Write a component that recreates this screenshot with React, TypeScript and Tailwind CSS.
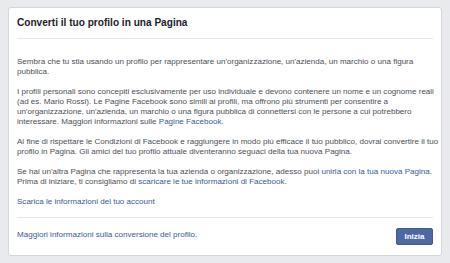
export default function App() {
  return (
    <div className="min-h-[263px] w-[450px] bg-[#e9eaed] px-2 pt-[7px] font-['Liberation_Sans',Arial,sans-serif]">
      <div className="w-[434px] rounded-[3px] border border-[#d3d6db] bg-white">
        <div className="px-[8px]">
          <div className="flex h-[31px] items-center border-b border-[#e5e5e5] pb-[1px] text-[10.1px] font-bold text-[#1d2129]">
            Converti il tuo profilo in una Pagina
          </div>
        </div>
        <div className="px-[8px] pt-[18px] pb-[10px] text-[8.05px] leading-[10px] text-[#4b4f56] whitespace-nowrap">
          <p className="mb-[10px]">
            Sembra che tu stia usando un profilo per rappresentare un'organizzazione, un'azienda, un marchio o una figura
            <br />
            pubblica.
          </p>
          <p className="mb-[10px]">
            I profili personali sono concepiti esclusivamente per uso individuale e devono contenere un nome e un cognome reali
            <br />
            (ad es. Mario Rossi). Le Pagine Facebook sono simili ai profili, ma offrono più strumenti per consentire a
            <br />
            un'organizzazione, un'azienda, un marchio o una figura pubblica di connettersi con le persone a cui potrebbero
            <br />
            interessare. Maggiori informazioni sulle <span className="text-[#3b5998]">Pagine Facebook</span>.
          </p>
          <p className="mb-[10px]">
            Al fine di rispettare le Condizioni di Facebook e raggiungere in modo più efficace il tuo pubblico, dovrai convertire il tuo
            <br />
            profilo in Pagina. Gli amici del tuo profilo attuale diventeranno seguaci della tua nuova Pagina.
          </p>
          <p className="mb-[10px]">
            Se hai un'altra Pagina che rappresenta la tua azienda o organizzazione, adesso puoi{" "}
            <span className="text-[#3b5998]">unirla con la tua nuova Pagina</span>.
            <br />
            Prima di iniziare, ti consigliamo di{" "}
            <span className="text-[#3b5998]">scaricare le tue informazioni di Facebook</span>.
          </p>
          <p className="text-[#3b5998]">Scarica le informazioni del tuo account</p>
        </div>
        <div className="px-[8px]">
          <div className="flex h-[38px] items-center justify-between border-t border-[#e5e5e5]">
            <span className="-mt-[3px] text-[8.05px] text-[#3b5998]">
              Maggiori informazioni sulla conversione del profilo.
            </span>
            <button className="flex h-[17px] w-[37px] items-center justify-center rounded-[2px] border border-[#435a8c] bg-[#4e69a2] text-[8px] font-bold text-white">
              Inizia
            </button>
          </div>
        </div>
      </div>
    </div>
  );
}
